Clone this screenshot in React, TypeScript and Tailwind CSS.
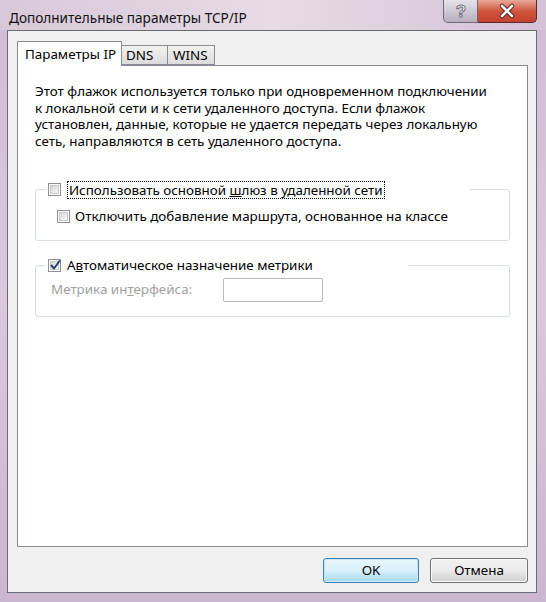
import React from "react";

const font = { fontFamily: '"Noto Sans", "Open Sans", sans-serif' };

function Check({ checked = false }: { checked?: boolean }) {
  return (
    <span className="relative flex h-[13px] w-[13px] shrink-0 items-center justify-center border border-[#8e8f8f] bg-white">
      <span className="h-[9px] w-[9px] border border-[#c9c9c9] bg-gradient-to-br from-[#d6d6d6] to-[#f8f8f8]" />
      {checked && (
        <svg className="absolute left-[0px] top-[-1px]" width="13" height="13" viewBox="0 0 13 13">
          <path d="M2.5 6.5 L5 9.5 L10.5 2" fill="none" stroke="#2b3f7a" strokeWidth="2" strokeLinecap="round" strokeLinejoin="round" />
        </svg>
      )}
    </span>
  );
}

export default function App() {
  return (
    <div
      className="flex h-[602px] w-[546px] flex-col overflow-hidden bg-gradient-to-b from-[#cfbdd4] via-[#d9c9db] to-[#cbb6cf] text-[#000]"
      style={font}
    >
      {/* title bar */}
      <div className="flex h-[30px] shrink-0 items-start bg-gradient-to-r from-[#d8c9d9] via-[#e6dbe6] to-[#d4c2d6]">
        <div className="pl-[9px] pt-[8px] text-[13.6px] leading-[19px] text-[#111]">
          Дополнительные параметры TCP/IP
        </div>
        <div className="flex-1" />
        <div className="mr-[9px] flex">
          <div className="flex h-[23px] w-[35px] items-center justify-center rounded-bl-[5px] border border-t-0 border-[#6e6a78] bg-gradient-to-b from-[#e6e2ea] via-[#cfc9d4] to-[#b8b0bd]">
            <svg width="16" height="18" viewBox="0 0 16 18">
              <text x="8" y="15" textAnchor="middle" fontSize="17" fontWeight="bold" fontFamily="Liberation Sans, sans-serif" fill="#ffffff" stroke="#7c7884" strokeWidth="1.1">?</text>
            </svg>
          </div>
          <div className="flex h-[23px] w-[59px] items-center justify-center rounded-br-[5px] border border-l-0 border-t-0 border-[#5b2a2a] bg-gradient-to-b from-[#e9a99a] via-[#d0553f] to-[#c4412e]">
            <svg width="20" height="16" viewBox="0 0 20 16">
              <path d="M5 3 L15 13 M15 3 L5 13" stroke="#4a1c18" strokeWidth="4.5" strokeLinecap="round" />
              <path d="M5 3 L15 13 M15 3 L5 13" stroke="#ffffff" strokeWidth="2.6" strokeLinecap="round" />
            </svg>
          </div>
        </div>
      </div>

      {/* client */}
      <div className="mb-[9px] ml-[7px] mr-[9px] flex flex-1 flex-col border border-[#6f6a78] bg-[#f0f0f0] pb-[9px] pl-[9px] pr-[8px] pt-[10px]">
        {/* tabs */}
        <div className="flex h-[24px] items-end text-[13.4px] leading-[17px]">
          <div className="relative z-10 mb-[-1px] flex h-[25px] w-[105px] items-center border border-b-0 border-[#898c95] bg-white pl-[7px]">
            Параметры IP
          </div>
          <div className="flex h-[20px] w-[46px] items-center border border-l-0 border-[#898c95] bg-gradient-to-b from-[#f2f2f2] to-[#dcdcdc] pl-[4px]">
            DNS
          </div>
          <div className="flex h-[20px] w-[47px] items-center border border-l-0 border-[#898c95] bg-gradient-to-b from-[#f2f2f2] to-[#dcdcdc] pl-[5px]">
            WINS
          </div>
        </div>

        {/* panel */}
        <div className="flex-1 border border-[#898c95] bg-white px-[17px] pt-[17px] text-[13.4px] leading-[17px]">
          <p className="whitespace-nowrap leading-[16.7px]">
            Этот флажок используется только при одновременном подключении
            <br />
            к локальной сети и к сети удаленного доступа. Если флажок
            <br />
            установлен, данные, которые не удается передать через локальную
            <br />
            сеть, направляются в сеть удаленного доступа.
          </p>

          <fieldset className="mt-[31px] rounded-[3px] border border-[#d5dfe5] pb-[15px] pl-[10px] pr-[10px] pt-[9px]">
            <legend className="flex h-[18px] w-[424px] items-center pl-[2px]">
              <Check />
              <span className="ml-[6px] border border-dotted border-black px-[1px] leading-[16px]">
                Использовать основной <span className="underline underline-offset-[1px]">ш</span>люз в удаленной сети
              </span>
            </legend>
            <div className="ml-[11px] flex h-[17px] items-center gap-[5px]">
              <Check />
              <span>Отключить добавление маршрута, основанное на классе</span>
            </div>
          </fieldset>

          <fieldset className="mt-[16px] rounded-[3px] border border-[#d5dfe5] pb-[14px] pl-[10px] pr-[10px] pt-[3px]">
            <legend className="flex h-[18px] w-[362px] items-center pl-[2px]">
              <Check checked />
              <span className="ml-[6px]">
                А<span className="underline underline-offset-[1px]">в</span>томатическое назначение метрики
              </span>
            </legend>
            <div className="flex h-[24px] items-center">
              <span className="w-[177px] pl-[5px] text-[#a0a0a0]">
                Метрика ин<span className="underline underline-offset-[1px]">т</span>ерфейса:
              </span>
              <div className="h-[24px] w-[100px] rounded-[2px] border border-[#b9b9b9] bg-white" />
            </div>
          </fieldset>
        </div>

        {/* buttons */}
        <div className="flex justify-end gap-[11px] pt-[11px] text-[13.4px]">
          <button className="flex h-[25px] w-[96px] items-center justify-center rounded-[3px] border border-[#3c7fb1] bg-gradient-to-b from-[#eaf6fd] via-[#d9f0fc] to-[#a7d9f5] shadow-[inset_0_0_0_1px_#c7e9fb]">
            OK
          </button>
          <button className="flex h-[25px] w-[98px] items-center justify-center rounded-[3px] border border-[#707070] bg-gradient-to-b from-[#f2f2f2] via-[#ebebeb] to-[#cfcfcf] shadow-[inset_0_0_0_1px_#fbfbfb]">
            Отмена
          </button>
        </div>
      </div>
    </div>
  );
}
